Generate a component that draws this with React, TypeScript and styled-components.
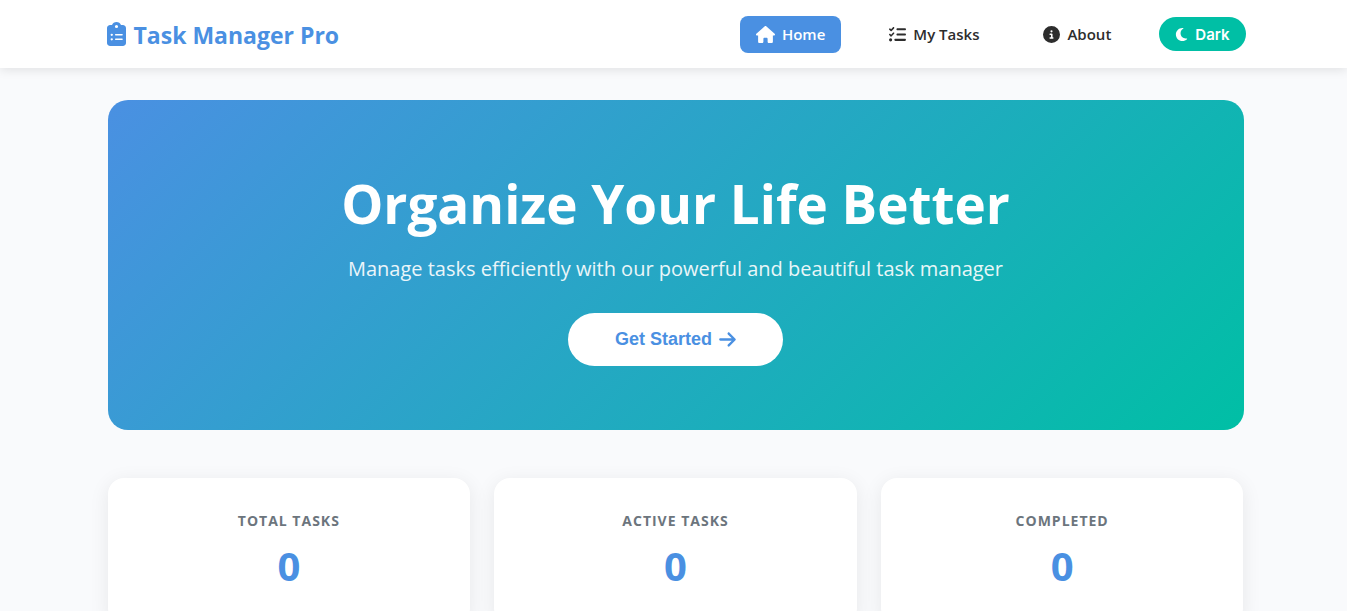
import React from "react";
import styled, { createGlobalStyle } from "styled-components";
import {
  FaArrowRight,
  FaCircleInfo,
  FaClipboardList,
  FaHouse,
  FaListCheck,
  FaMoon,
} from "react-icons/fa6";

const blue = "#4a90e2";
const teal = "#00bfa5";

const GlobalStyle = createGlobalStyle`
  *, *::before, *::after { box-sizing: border-box; }
  body {
    margin: 0;
    background: #f9fafc;
    color: #2d2d2d;
    font-family: "Segoe UI", "Open Sans", "Noto Sans", sans-serif;
  }
  h1, h2, p { margin: 0; }
`;

const Header = styled.header`
  position: sticky;
  top: 0;
  z-index: 1;
  background: #fff;
  box-shadow: 0 2px 10px rgba(0, 0, 0, 0.1);
`;

const Container = styled.div`
  max-width: 1200px;
  margin: 0 auto;
  padding: 0 30px 0 34px;
`;

const Bar = styled(Container)`
  display: flex;
  align-items: center;
  justify-content: space-between;
  min-height: 68px;
  padding: 0 28px 0 33px;
`;

const Brand = styled.a`
  display: flex;
  align-items: center;
  gap: 8px;
  color: ${blue};
  font-size: 23px;
  font-weight: 700;
  line-height: 32px;
  text-decoration: none;
  svg { width: 19px; height: 24px; }
`;

const BrandName = styled.span`
  padding-top: 2px;
`;

const Nav = styled.nav`
  display: flex;
  align-items: center;
  gap: 32px;
`;

const NavLink = styled.a<{ $active?: boolean }>`
  display: flex;
  align-items: center;
  gap: 7px;
  height: 37px;
  padding: 0 16px;
  border-radius: 8px;
  background: ${(p) => (p.$active ? blue : "transparent")};
  color: ${(p) => (p.$active ? "#fff" : "#2d2d2d")};
  font-size: 15px;
  font-weight: 600;
  text-decoration: none;
  svg { width: auto; height: 17px; }
`;

const HomeIcon = styled(FaHouse)`
  && { height: 17px; width: 19px; }
`;

const ThemeButton = styled.button`
  display: flex;
  align-items: center;
  gap: 7px;
  height: 34px;
  padding: 0 16px;
  border: 0;
  border-radius: 20px;
  background: ${teal};
  color: #fff;
  font: 600 15px "Inter", sans-serif;
  cursor: pointer;
  svg { width: 13px; height: 15px; }
`;

const Hero = styled.section`
  display: flex;
  flex-direction: column;
  align-items: center;
  margin-top: 32px;
  padding: 64px 32px;
  border-radius: 20px;
  background: linear-gradient(135deg, ${blue} 0%, ${teal} 100%);
  color: #fff;
  text-align: center;
`;

const HeroTitle = styled.h1`
  margin-top: 4px;
  font-size: 53px;
  font-weight: 700;
  line-height: 72px;
`;

const HeroText = styled.p`
  margin: 14px 0 30px;
  font-size: 20px;
  line-height: 29px;
  opacity: 0.9;
`;

const StartButton = styled.button`
  display: flex;
  align-items: center;
  gap: 7px;
  height: 53px;
  padding: 0 47px;
  border: 0;
  border-radius: 50px;
  background: #fff;
  color: ${blue};
  font: 700 18px "Liberation Sans", Arial, sans-serif;
  cursor: pointer;
  svg { width: 17px; height: 19px; }
`;

const Stats = styled.section`
  display: grid;
  grid-template-columns: repeat(auto-fit, minmax(250px, 1fr));
  gap: 24px;
  margin: 48px 0 0;
`;

const Card = styled.article`
  padding: 32px;
  border-radius: 16px;
  background: #fff;
  box-shadow: 0 4px 20px rgba(0, 0, 0, 0.08);
  text-align: center;
`;

const CardLabel = styled.h2`
  color: #6c757d;
  font-size: 14px;
  font-weight: 700;
  line-height: 22px;
  letter-spacing: 1px;
  text-transform: uppercase;
`;

const CardValue = styled.p`
  margin-top: 8px;
  color: ${blue};
  font-size: 40px;
  font-weight: 700;
  line-height: 52px;
`;

const stats = [
  { label: "Total Tasks", value: 0 },
  { label: "Active Tasks", value: 0 },
  { label: "Completed", value: 0 },
];

export default function App() {
  return (
    <>
      <GlobalStyle />
      <Header>
        <Bar>
          <Brand href="#home">
            <FaClipboardList aria-hidden preserveAspectRatio="none" />
            <BrandName>Task Manager Pro</BrandName>
          </Brand>
          <Nav>
            <NavLink href="#home" $active aria-current="page">
              <HomeIcon aria-hidden />
              Home
            </NavLink>
            <NavLink href="#tasks">
              <FaListCheck aria-hidden />
              My Tasks
            </NavLink>
            <NavLink href="#about">
              <FaCircleInfo aria-hidden />
              About
            </NavLink>
            <ThemeButton type="button">
              <FaMoon aria-hidden />
              Dark
            </ThemeButton>
          </Nav>
        </Bar>
      </Header>
      <Container as="main">
        <Hero>
          <HeroTitle>Organize Your Life Better</HeroTitle>
          <HeroText>
            Manage tasks efficiently with our powerful and beautiful task manager
          </HeroText>
          <StartButton type="button">
            Get Started
            <FaArrowRight aria-hidden />
          </StartButton>
        </Hero>
        <Stats aria-label="Task statistics">
          {stats.map((s) => (
            <Card key={s.label}>
              <CardLabel>{s.label}</CardLabel>
              <CardValue>{s.value}</CardValue>
            </Card>
          ))}
        </Stats>
      </Container>
    </>
  );
}
